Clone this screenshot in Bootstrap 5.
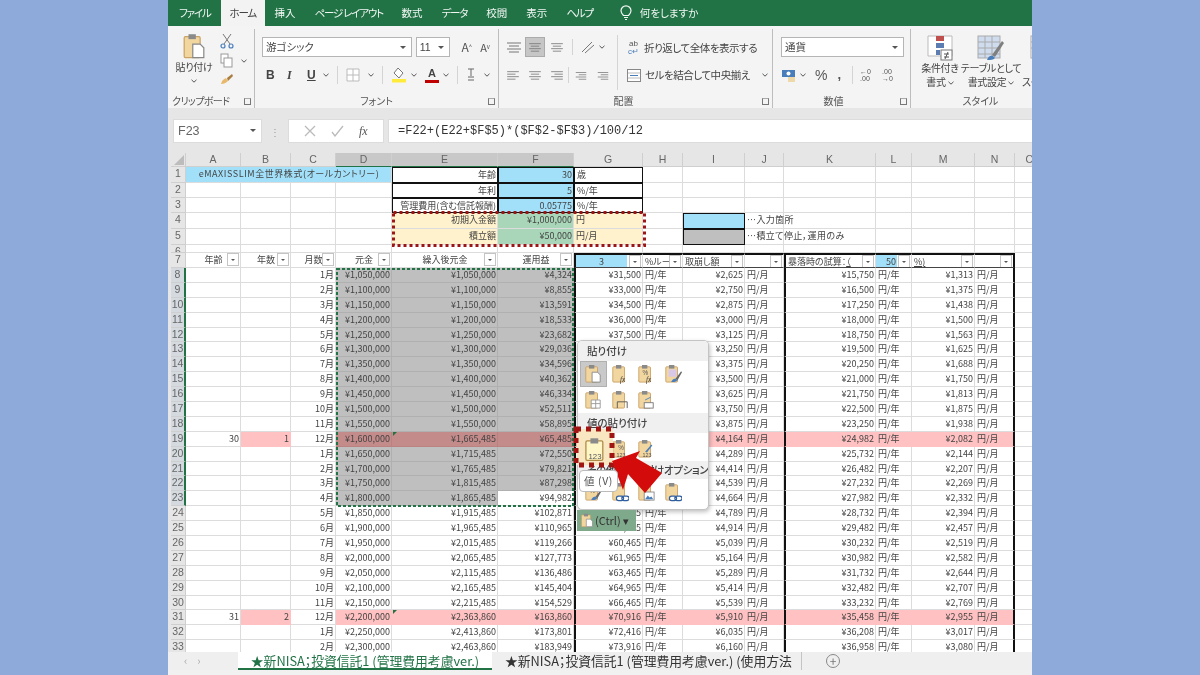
<!DOCTYPE html>
<html lang="ja">
<head>
<meta charset="UTF-8">
<title>Excel</title>
<link href="https://cdn.jsdelivr.net/npm/bootstrap@5.3.0/dist/css/bootstrap.min.css" rel="stylesheet">
<style>
  body { background:#8eaadb; font-family:"Noto Sans CJK JP","Liberation Sans",sans-serif; font-feature-settings:"palt"; color:#333; overflow:hidden; }
  .xl-app { width:864px; height:675px; background:#e6e6e6; overflow:hidden; filter:blur(.35px); }
  /* tab bar */
  .xl-tabs { height:26px; background:#217346; color:#f2f7f4; font-size:10.5px; }
  .xl-tab { padding:0 9.5px; line-height:26px; white-space:nowrap; }
  .xl-tab.on { background:#f3f3f3; color:#444; }
  .xl-kana { letter-spacing:-1.2px; }
  /* ribbon */
  .xl-ribbon { height:82px; background:#f4f4f4; font-size:10.5px; }
  .rb-grp { position:relative; height:79px; border-right:1px solid #bdbdbd; flex:none; }
  .rb-label { position:absolute; left:0; right:0; bottom:0; line-height:14px; text-align:center; font-size:10px; color:#555; white-space:nowrap; }
  .rb-launch { position:absolute; right:3px; bottom:3px; width:7px; height:7px; border:1px solid #777; border-top-color:#aaa; border-right-color:#777; }
  .rb-sel { height:20px; background:#fff; border:1px solid #b5b5b5; line-height:18px; padding:0 3px; position:relative; font-size:10.5px; color:#444; }
  .rb-sel::after { content:""; position:absolute; right:5px; top:8px; border:3px solid transparent; border-top-color:#555; border-bottom:0; }
  .rb-row { height:20px; }
  .rb-v { width:6px; height:6px; flex:none; }
  .rb-txt { font-size:10.5px; color:#444; white-space:nowrap; letter-spacing:-.45px; }
  .rb-big { font-size:10px; line-height:14px; text-align:center; color:#444; white-space:nowrap; letter-spacing:-.3px; }
  .rb-on { background:#c6c6c6; border:1px solid #ababab; }
  .rb-sep { width:1px; background:#d4d4d4; }
  /* formula bar */
  .xl-fbar { height:45px; padding:11px 0 10px 5px; background:#e6e6e6; }
  .fb-box { background:#fff; height:24px; border:1px solid #dcdcdc; color:#666; }
  .fb-name { width:89px; font-size:12.5px; padding-left:4px; line-height:22px; position:relative; font-family:"Liberation Sans",sans-serif; }
  .fb-name::after { content:""; position:absolute; right:5px; top:9px; border:3px solid transparent; border-top-color:#555; border-bottom:0; }
  .fb-tools { width:96px; }
  .fb-formula { font-family:"Liberation Mono",monospace; font-size:12px; line-height:22px; padding-left:9px; color:#333; }
  /* sheet */
  .xl-sheet { position:relative; height:499px; background:#fff; overflow:hidden; }
  .xl-grid { display:grid;
    grid-template-columns:3px 15px 55px 50px 45px 56px 106px 76px 69px 40px 62px 39px 92px 36px 63px 40px 30px;
    grid-template-rows:14px 16px 15px 15px 16px 16px 8px 15px repeat(26,14.9px);
    font-size:9px; line-height:14px; color:#444; }
  .xc { border-right:1px solid #dcdcdc; border-bottom:1px solid #dcdcdc; padding:0 1px 0 2px; white-space:nowrap; overflow:hidden; position:relative; }
  .xgut, .xhd { background:#e6e6e6; }
  .xhd { text-align:center; color:#666; border-right:1px solid #cfcfcf; border-bottom:1px solid #cfcfcf; font-family:"Liberation Sans",sans-serif; font-size:10.5px; line-height:13px; overflow:hidden; position:relative; }
  .xhd.sel { background:#c8c8c8; border-bottom:1px solid #217346; }
  .xhd.rsel { background:#d4dae0; border-right:2px solid #217346; }
  .xhd.xcorner::after { content:""; position:absolute; right:1px; bottom:1px; border-bottom:10px solid #bcbcbc; border-left:10px solid transparent; }
  .xfree { overflow:visible; letter-spacing:.4px; }
  .xwide { letter-spacing:.55px; }
  .f-blue { background:#a2e0f9; }
  .f-gray { background:#bfbfbf; border-color:#b0b0b0; }
  .f-pink { background:#ffc1c1; border-color:#ffc1c1; }
  .f-gpink { background:#c48b8b; border-color:#bb8282; }
  .f-cream { background:#fff2cc; }
  .f-green { background:#a9d6b8; }
  .f-white { background:#fff; }
  .b-all { border:1px solid #111; }
  .b-l { border-left:2px solid #111; }
  .b-r { border-right:2px solid #111; }
  .b-t { border-top:2px solid #111; }
  .b-b { border-bottom:1px solid #444; }
  .xtri::before { content:""; position:absolute; left:1px; top:0; border-top:4px solid #217346; border-right:4px solid transparent; }
  .xflt { position:absolute; right:1px; top:0; width:12px; height:13px; background:#fff; border:1px solid #c4c4c4; }
  .xflt::after { content:""; position:absolute; left:3px; top:5px; border:2.5px solid transparent; border-top-color:#555; border-bottom:0; }
  /* overlays on the sheet */
  .ov { position:absolute; }
  .ov-red { left:224px; top:58px; }
  .ov-ants { left:168px; top:115px; }
  .pp { left:409px; top:187px; width:132px; height:170px; background:#fff; border:1px solid #c4c4c4; border-radius:5px; box-shadow:1px 2px 4px rgba(0,0,0,.25); font-size:10.5px; overflow:hidden; }
  .pp-h { background:#f0f0f0; height:20px; line-height:20px; padding-left:9px; font-weight:500; color:#444; white-space:nowrap; }
  .pp-r { height:26px; padding-left:2px; }
  .pp-i { width:26.6px; height:26px; flex:none; text-align:center; padding-top:3px; }
  .pp-i.on { background:#c9c9c9; border:1px solid #b0b0b0; padding-top:2px; }
  .ov-tip { left:411px; top:317px; width:39px; height:22px; background:#fff; border:1px solid #bbb; border-radius:4px; font-size:10.5px; line-height:20px; text-align:center; color:#555; letter-spacing:.6px; white-space:nowrap; }
  .ov-hot { left:409px; top:276px; width:36px; height:36px; background:#f8e7c0; }
  .ov-ctrl { left:409px; top:357px; width:59px; height:21px; background:#7fa98b; font-size:11px; line-height:21px; color:#333; padding-left:18px; white-space:nowrap; }
  /* sheet tabs */
  .xl-stabs { height:18px; background:#efefef; font-size:12.8px; line-height:17px; }
  .st-nav { width:70px; color:#aaa; font-size:11px; padding-left:16px; letter-spacing:10px; }
  .st-on { width:254px; background:#fff; border-bottom:2px solid #217346; color:#217346; text-align:center; white-space:nowrap; }
  .st-off { width:310px; padding-left:13px; color:#333; border-right:1px solid #c4c4c4; white-space:nowrap; overflow:hidden; }
  .st-add { width:14px; height:14px; margin:2px 0 0 24px; border:1px solid #888; border-radius:50%; color:#777; line-height:11px; text-align:center; font-size:12px; }
  .xl-foot { height:5px; background:#f1f1f1; }
</style>
</head>
<body>
<svg width="0" height="0" class="position-absolute">
  <symbol id="chev" viewBox="0 0 6 6"><path d="M.5 1.8 3 4.2 5.5 1.8" fill="none" stroke="#555" stroke-width="1"/></symbol>
  <symbol id="lines-l" viewBox="0 0 16 12"><path d="M1 2h14M1 5h10M1 8h14M1 11h10" stroke="#777" fill="none"/></symbol>
  <symbol id="lines-c" viewBox="0 0 16 12"><path d="M1 2h14M3 5h10M1 8h14M3 11h10" stroke="#777" fill="none"/></symbol>
  <symbol id="lines-r" viewBox="0 0 16 12"><path d="M1 2h14M5 5h10M1 8h14M5 11h10" stroke="#777" fill="none"/></symbol>
  <symbol id="clip" viewBox="0 0 20 22">
    <rect x="2" y="3" width="13" height="17" rx="1" fill="#f2d6a0" stroke="#c9a265"/>
    <rect x="5.5" y="1" width="6" height="4" fill="#8a8a8a"/>
    <path d="M9 9h6l3 3v8H9z" fill="#fff" stroke="#888"/>
  </symbol>
</svg>

<div class="d-flex justify-content-center">
<div class="xl-app">

  <div class="xl-tabs d-flex">
    <div class="xl-tab xl-kana" style="margin-left:1px;padding:0 10px">ファイル</div>
    <div class="xl-tab xl-kana on" style="width:44px;padding:0 9px">ホーム</div>
    <div class="xl-tab" style="padding:0 10px">挿入</div>
    <div class="xl-tab xl-kana" style="padding:0 9px">ページ レイアウト</div>
    <div class="xl-tab">数式</div>
    <div class="xl-tab xl-kana">データ</div>
    <div class="xl-tab">校閲</div>
    <div class="xl-tab">表示</div>
    <div class="xl-tab xl-kana">ヘルプ</div>
    <div class="xl-tab d-flex align-items-center gap-2 ms-2">
      <svg width="12" height="16" viewBox="0 0 12 16"><path d="M3.5 10.5C2 9 1 7.8 1 5.8a5 5 0 0 1 10 0c0 2-1 3.2-2.500 4.700zM4 12.500h4M5 14.500h2" fill="none" stroke="#f2f7f4" stroke-width="1.200"/></svg>
      <span>何をしますか</span>
    </div>
  </div>

  <div class="xl-ribbon d-flex">
    <!-- clipboard -->
    <div class="rb-grp d-flex" style="width:87px;margin-top:3px">
      <div class="d-flex flex-column align-items-center" style="width:44px;margin-left:4px">
        <svg width="26" height="27" viewBox="0 0 20 22" class="mt-1"><use href="#clip"/></svg>
        <div class="rb-big">貼り付け</div>
        <svg class="rb-v mt-1"><use href="#chev"/></svg>
      </div>
      <div class="d-flex flex-column gap-1 align-items-start" style="margin:4px 0 0 4px">
        <svg width="14" height="16" viewBox="0 0 14 16"><path d="M3 1l7 10M11 1 4 11" stroke="#777" fill="none"/><circle cx="3" cy="13" r="2" fill="none" stroke="#4a7ebb" stroke-width="1.200"/><circle cx="11" cy="13" r="2" fill="none" stroke="#4a7ebb" stroke-width="1.200"/></svg>
        <div class="d-flex align-items-center gap-2"><svg width="13" height="15" viewBox="0 0 13 15"><rect x="1" y="1" width="7" height="9" fill="#fff" stroke="#999"/><rect x="4" y="5" width="8" height="9" fill="#fff" stroke="#999"/></svg><svg class="rb-v"><use href="#chev"/></svg></div>
        <svg width="14" height="14" viewBox="0 0 14 14"><path d="M1 12c1-4 3-5 5-6l2 3c-2 2-4 3-7 3z" fill="#e8b96a"/><path d="M7 6l5-4 1 2-5 5z" fill="#a87d3f"/></svg>
      </div>
      <div class="rb-label text-start ps-1" style="letter-spacing:-.6px">クリップボード</div>
      <div class="rb-launch"></div>
    </div>

    <!-- font -->
    <div class="rb-grp px-2" style="width:244px;margin-top:3px">
      <div class="d-flex align-items-center gap-1 mt-2" style="margin-left:-1px">
        <div class="rb-sel" style="width:151px">游ゴシック</div>
        <div class="rb-sel" style="width:34px;font-family:'Liberation Sans',sans-serif">11</div>
        <span class="ms-2" style="font-size:12px;color:#555">A<sup style="font-size:6px">^</sup></span>
        <span class="ms-1" style="font-size:11px;color:#555">A<sup style="font-size:6px">v</sup></span>
      </div>
      <div class="rb-row d-flex align-items-center" style="margin:8px 0 0 3px;font-family:'Liberation Sans',sans-serif;font-size:12px;color:#444">
        <b style="width:21px">B</b><i style="width:20px;font-weight:700;font-family:'Liberation Serif',serif">I</i><u style="width:16px;font-weight:700">U</u><svg class="rb-v"><use href="#chev"/></svg>
        <span class="rb-sep mx-2" style="height:18px"></span>
        <svg width="14" height="14" viewBox="0 0 14 14" class="me-1"><path d="M1 1h12v12H1zM7 1v12M1 7h12" fill="#fff" stroke="#bbb"/></svg>
        <svg class="rb-v ms-1"><use href="#chev"/></svg>
        <span class="rb-sep mx-2" style="height:18px"></span>
        <svg width="16" height="16" viewBox="0 0 16 16"><path d="M7 1l5 5-4 5-5-5z" fill="#fff" stroke="#777"/><rect x="1" y="12" width="14" height="3.500" fill="#ffeb3b"/></svg>
        <svg class="rb-v ms-1"><use href="#chev"/></svg>
        <span class="ms-2 d-flex flex-column align-items-center" style="width:14px;font:700 11px/11px 'Liberation Sans',sans-serif">A<span class="d-block w-100" style="height:3px;background:#c00000;margin-top:1px"></span></span>
        <svg class="rb-v ms-1"><use href="#chev"/></svg>
        <span class="rb-sep mx-2" style="height:18px"></span>
        <svg width="10" height="14" viewBox="0 0 10 14"><path d="M2 1h6M5 1v7M2 9h6M2 12h6" stroke="#666" fill="none"/></svg>
        <svg class="rb-v ms-2"><use href="#chev"/></svg>
      </div>
      <div class="rb-label">フォント</div>
      <div class="rb-launch"></div>
    </div>

    <!-- alignment -->
    <div class="rb-grp d-flex" style="width:274px;margin-top:3px">
      <div style="width:118px;padding:7px 0 0 7px">
        <div class="d-flex align-items-center" style="height:21px">
          <svg width="16" height="12" style="margin-right:3px"><use href="#lines-c"/></svg>
          <span class="rb-on d-flex align-items-center justify-content-center" style="width:20px;height:20px"><svg width="14" height="10"><use href="#lines-c"/></svg></span>
          <svg width="14" height="10" style="margin-left:5px"><use href="#lines-c"/></svg>
          <span class="rb-sep mx-2" style="height:16px"></span>
          <svg width="14" height="14" viewBox="0 0 14 14"><path d="M1 12 11 2M4 13 13 5" stroke="#777" fill="none"/></svg>
          <svg class="rb-v ms-1"><use href="#chev"/></svg>
        </div>
        <div class="d-flex align-items-center" style="height:20px;margin-top:8px">
          <svg width="14" height="10"><use href="#lines-l"/></svg>
          <svg width="14" height="10" style="margin-left:8px"><use href="#lines-c"/></svg>
          <svg width="14" height="10" style="margin-left:8px"><use href="#lines-r"/></svg>
          <span class="rb-sep" style="height:16px;margin:0 4px"></span>
          <svg width="12" height="11" style="margin-left:2px"><use href="#lines-r"/></svg>
          <svg width="12" height="11" style="margin-left:10px"><use href="#lines-r"/></svg>
        </div>
      </div>
      <span class="rb-sep" style="height:55px;margin-top:6px"></span>
      <div style="padding:9px 0 0 9px">
        <div class="d-flex align-items-center gap-1" style="height:20px">
          <span style="font:8px/8px 'Liberation Sans',sans-serif;color:#555;width:13px;text-align:center">ab<br><span style="color:#4a7ebb">c↵</span></span>
          <span class="rb-txt">折り返して全体を表示する</span>
        </div>
        <div class="d-flex align-items-center gap-1" style="height:20px;margin-top:7px">
          <svg width="14" height="13" viewBox="0 0 14 13"><rect x=".5" y=".5" width="13" height="12" fill="#fff" stroke="#888"/><path d="M1 4h12M1 9h12" stroke="#bbb"/><path d="M3 6.500h8" stroke="#4a7ebb"/></svg>
          <span class="rb-txt">セルを結合して中央揃え</span>
          <svg class="rb-v ms-2"><use href="#chev"/></svg>
        </div>
      </div>
      <div class="rb-label pe-4">配置</div>
      <div class="rb-launch"></div>
    </div>

    <!-- number -->
    <div class="rb-grp px-2" style="width:138px;margin-top:3px">
      <div class="rb-sel mt-2" style="width:123px">通貨</div>
      <div class="d-flex align-items-center" style="height:20px;margin-top:8px;font-family:'Liberation Sans',sans-serif;color:#555">
        <svg width="15" height="14" viewBox="0 0 15 14"><rect x="1" y="2" width="13" height="7" fill="#4a7ebb"/><circle cx="7.500" cy="5.500" r="2" fill="#fff"/><rect x="7" y="9" width="7" height="5" fill="#f0d9a8"/></svg>
        <svg class="rb-v ms-1"><use href="#chev"/></svg>
        <span style="font-size:14px;margin-left:9px">%</span>
        <b style="font-size:13px;margin-left:10px">,</b>
        <span class="rb-sep" style="height:18px;margin:0 7px 0 11px"></span>
        <span style="font-size:7px;line-height:7px;width:14px">←0<br>.00</span>
        <span style="font-size:7px;line-height:7px;width:14px;margin-left:8px">.00<br>→0</span>
      </div>
      <div class="rb-label pe-3">数値</div>
      <div class="rb-launch"></div>
    </div>

    <!-- style -->
    <div class="d-flex position-relative flex-grow-1" style="margin-top:3px;height:79px">
      <div class="d-flex flex-column align-items-center" style="width:46px;margin-left:6px;padding-top:6px">
        <svg width="26" height="26" viewBox="0 0 26 26"><path d="M1 1h24v20H1z" fill="#fff" stroke="#bbb"/><rect x="9" y="1" width="8" height="5" fill="#c0504d"/><rect x="9" y="8" width="8" height="5" fill="#5b7db1"/><rect x="9" y="15" width="4" height="5" fill="#5b7db1"/><rect x="14" y="15" width="11" height="10" fill="#fff" stroke="#777"/><path d="M17 19h5M17 22h5M21 17l-3 7" stroke="#555" fill="none"/></svg>
        <div class="rb-big">条件付き<br>書式 <svg class="rb-v"><use href="#chev"/></svg></div>
      </div>
      <div class="d-flex flex-column align-items-center" style="width:56px;padding-top:6px">
        <svg width="28" height="26" viewBox="0 0 28 26"><rect x="1" y="1" width="22" height="22" fill="#cfdcee" stroke="#aaa"/><path d="M1 7h22M1 13h22M1 19h22M8 1v22M15 1v22" stroke="#aaa" fill="none"/><path d="M15 20 25 6l2 2-9 14z" fill="#7f7f7f"/><path d="M10 25c1-3 3-5 6-4l2 2c-2 2-4 2-8 2z" fill="#4a7ebb"/></svg>
        <div class="rb-big">テーブルとして<br>書式設定 <svg class="rb-v"><use href="#chev"/></svg></div>
      </div>
      <div class="d-flex flex-column overflow-hidden" style="margin-left:3px;padding-top:6px;flex:1">
        <svg width="20" height="26" viewBox="0 0 20 26" class="ms-2"><rect x="1" y="1" width="24" height="22" fill="#fff" stroke="#aaa"/><path d="M1 7h24M1 13h24" stroke="#aaa"/></svg>
        <div class="rb-big text-start">&nbsp;<br>スタ</div>
      </div>
      <div class="rb-label">スタイル</div>
    </div>
  </div>

  <div class="xl-fbar d-flex">
    <div class="fb-box fb-name">F23</div>
    <div class="d-flex align-items-center justify-content-center" style="width:26px;color:#999;font-size:10px">⋮</div>
    <div class="fb-box fb-tools d-flex align-items-center justify-content-around px-2">
      <svg width="12" height="12" viewBox="0 0 12 12"><path d="M1 1l10 10M11 1 1 11" stroke="#bbb" stroke-width="1.300"/></svg>
      <svg width="13" height="12" viewBox="0 0 13 12"><path d="M1 7l3 4 8-10" stroke="#bbb" stroke-width="1.300" fill="none"/></svg>
      <i style="font:italic 12px 'Liberation Serif',serif;color:#555">fx</i>
    </div>
    <div class="fb-box fb-formula flex-grow-1 ms-1" style="border-right:0">=F22+(E22+$F$5)*($F$2-$F$3)/100/12</div>
  </div>

  <div class="xl-sheet">
    <div class="xl-grid" id="grid"></div>

    <svg class="ov ov-ants" width="238" height="239"><rect x="1" y="1" width="236" height="237" fill="none" stroke="#217346" stroke-width="2" stroke-dasharray="3 2"/></svg>
    <svg class="ov ov-red" width="255" height="36"><rect x="1.500" y="1.500" width="251" height="33" fill="none" stroke="#9c1616" stroke-width="3" stroke-dasharray="3 3"/></svg>

    <!-- paste menu -->
    <div class="ov pp">
      <div class="pp-h">貼り付け</div>
      <div class="pp-r d-flex" id="pr1"></div>
      <div class="pp-r d-flex" id="pr2"></div>
      <div class="pp-h">値の貼り付け</div>
      <div class="pp-r d-flex" id="pr3" style="height:28px;padding-top:3px"></div>
      <div class="pp-h" style="height:18px;line-height:18px;text-align:right;padding-right:3px;letter-spacing:-.4px">その他の貼り付けオプション</div>
      <div class="pp-r d-flex" id="pr4"></div>
    </div>
    <div class="ov ov-hot"></div>
    <svg class="ov" style="left:414px;top:284px" width="26" height="26" viewBox="0 0 20 20"><rect x="3" y="3" width="13" height="15" rx="1" fill="#fff6c8" stroke="#b08c4a"/><rect x="6.500" y="1" width="6" height="4" fill="#8a8a8a"/><text x="10" y="17" font-size="6" text-anchor="middle" font-family="Liberation Sans" fill="#555">123</text></svg>
    <svg class="ov" style="left:405px;top:273px" width="42" height="42"><rect x="3" y="3" width="36" height="36" fill="none" stroke="#a01414" stroke-width="5" stroke-dasharray="5 5"/></svg>
    <svg class="ov" style="left:0;top:0" width="864" height="499"><polygon points="444,308 472,298 468,305 494,320 477,340 460,321 455,337" fill="#d40b0b"/></svg>
    <div class="ov ov-tip">値 (V)</div>
    <div class="ov ov-ctrl">(Ctrl) ▾<svg class="position-absolute" style="left:3px;top:3px" width="14" height="15" viewBox="0 0 20 22"><use href="#clip"/></svg></div>
  </div>

  <div class="xl-stabs d-flex">
    <div class="st-nav">‹›</div>
    <div class="st-on">★新NISA；投資信託1 (管理費用考慮ver.)</div>
    <div class="st-off">★新NISA；投資信託1 (管理費用考慮ver.) (使用方法</div>
    <div class="st-add">+</div>
  </div>
  <div class="xl-foot"></div>
</div>
</div>

<script src="https://cdn.jsdelivr.net/npm/bootstrap@5.3.0/dist/js/bootstrap.bundle.min.js"></script>
<script>
  const grid = document.getElementById('grid');
  const letters = 'ABCDEFGHIJKLMNO'.split('');

  function cell(text, cls, span) {
    const d = document.createElement('div');
    d.className = cls;
    d.innerHTML = text;
    if (span) d.style.gridColumn = 'span ' + span;
    grid.appendChild(d);
  }
  const yen = n => '¥' + Math.round(n).toLocaleString('en-US');

  // column letters
  cell('', 'xgut');
  cell('', 'xhd xcorner');
  letters.forEach(c => cell(c, 'xhd' + ('DEF'.includes(c) ? ' sel' : '')));

  // rows 1-6
  const topRows = {
    1: { E:['年齢','b-all text-end'], F:['30','b-all f-blue text-end'], G:['歳','b-all'] },
    2: { E:['年利','b-all text-end'], F:['5','b-all f-blue text-end'], G:['%/年','b-all'] },
    3: { E:['管理費用(含む信託報酬)','b-all text-end'], F:['0.05775','b-all f-blue text-end'], G:['%/年','b-all'] },
    4: { E:['初期入金額','f-cream text-end'], F:['¥1,000,000','f-green text-end'], G:['円','f-cream'],
         I:['','b-all f-blue'], J:['…入力箇所','xfree'] },
    5: { E:['積立額','f-cream text-end'], F:['¥50,000','f-green text-end'], G:['円/月','f-cream'],
         I:['','b-all f-gray'], J:['…積立て停止，運用のみ','xfree'] },
    6: {}
  };
  for (let r = 1; r <= 6; r++) {
    cell('', 'xgut');
    cell(r, 'xhd');
    letters.forEach(c => {
      if (r === 1 && c === 'A') { cell('eMAXISSLIM全世界株式(オールカントリー)', 'xc f-blue text-center xwide', 4); return; }
      if (r === 1 && 'BCD'.includes(c)) return;
      const v = topRows[r][c] || ['', ''];
      cell(v[0], 'xc ' + v[1]);
    });
  }

  // row 7, filter headers
  const heads = { A:'年齢', B:'年数', C:'月数', D:'元金', E:'繰入後元金', F:'運用益', G:'3', H:'%ルー', I:'取崩し額', J:'',
                  K:'暴落時の試算：<u>（</u>', L:'50', M:'<u>%)</u>', N:'' };
  cell('', 'xgut');
  cell(7, 'xhd');
  letters.forEach(c => {
    if (c === 'O') { cell('', 'xc'); return; }
    let cls = 'xc text-center';
    if ('GHIJKLMN'.includes(c)) cls += ' b-t b-b';
    if (c === 'G' || c === 'K') cls += ' b-l';
    if (c === 'N') cls += ' b-r';
    if (c === 'H' || c === 'I' || c === 'K' || c === 'M') cls = cls.replace('text-center', 'text-start');
    if (c === 'L') cls = cls.replace('text-center', 'text-end');
    let inner = heads[c] + '<span class="xflt"></span>';
    if (c === 'G') inner = '<span class="d-block f-blue" style="margin:0 14px 0 -2px">3</span><span class="xflt"></span>';
    if (c === 'L') inner = '<span class="d-block f-blue" style="margin:0 13px 0 -2px;padding-right:1px">50</span><span class="xflt"></span>';
    cell(inner, cls);
  });

  // body rows 8-33
  const gain = [4324,8855,13591,18533,23682,29036,34596,40362,46334,52511,58895,65485,72550,79821,87298,94982,
                102871,110965,119266,127773,136486,145404,154529,163860,173801,183949];
  for (let r = 8; r <= 33; r++) {
    const i = r - 8;
    const gen = 1050000 + 50000 * i;
    let ins = gen;
    if (r >= 19) ins = 1665485 + 50000 * (r - 19);
    if (r >= 31) ins = 2363860 + 50000 * (r - 31);
    const pink = r === 19 || r === 31;
    const gray = r <= 23;
    const tint = pink ? ' f-pink' : '';
    const g = ins * 0.03, k = ins * 0.015;
    const month = ((i % 12) + 1) + '月';
    const dfFill = (gray && pink) ? ' f-gpink' : gray ? ' f-gray' : tint;

    cell('', 'xgut');
    cell(r, 'xhd' + (gray ? ' rsel' : ''));
    cell(pink ? (r === 19 ? 30 : 31) : '', 'xc text-end');
    cell(pink ? (r === 19 ? 1 : 2) : '', 'xc text-end' + tint);
    cell(month, 'xc text-end');
    cell(yen(gen), 'xc text-end' + dfFill);
    cell(yen(ins), 'xc text-end' + dfFill + (pink ? ' xtri' : ''));
    cell(yen(gain[i]), 'xc text-end' + (r === 23 ? ' f-white' : dfFill));
    cell(yen(g), 'xc text-end b-l' + tint);
    cell('円/年', 'xc' + tint);
    cell(yen(g / 12), 'xc text-end' + tint);
    cell('円/月', 'xc' + tint);
    cell(yen(k), 'xc text-end b-l' + tint);
    cell('円/年', 'xc' + tint);
    cell(yen(k / 12), 'xc text-end' + tint);
    cell('円/月', 'xc b-r' + tint);
    cell('', 'xc');
  }

  // paste menu icons
  function icon(extra, on) {
    return '<div class="pp-i' + (on ? ' on' : '') + '"><svg width="18" height="20" viewBox="0 0 20 22">' +
      '<rect x="2" y="3" width="13" height="17" rx="1" fill="#f2d6a0" stroke="#c9a265"/>' +
      '<rect x="5.500" y="1" width="6" height="4" fill="#8a8a8a"/>' + extra + '</svg></div>';
  }
  const paper = '<path d="M9 9h6l3 3v8H9z" fill="#fff" stroke="#888"/>';
  const label = t => '<text x="13" y="20" font-size="8" font-style="italic" text-anchor="middle" font-family="Liberation Serif" fill="#333">' + t + '</text>';
  const brush = '<path d="M8 20c1-3 3-4 5-4l2 2c-2 2-3 2-7 2z" fill="#4a7ebb"/><path d="M13 16l6-8 1 1-5 9z" fill="#666"/>';
  const cells = '<path d="M8 11h10v9H8zM13 11v9M8 15h10" fill="#fff" stroke="#999"/>';
  const links = '<path d="M6 18a2.500 2.500 0 0 1 2.500-2.500h3a2.500 2.500 0 0 1 0 5h-3A2.500 2.500 0 0 1 6 18zm6 0a2.500 2.500 0 0 1 2.500-2.500h3a2.500 2.500 0 0 1 0 5h-3a2.500 2.500 0 0 1-2.500-2.500z" fill="#fff" stroke="#2f5f9e" stroke-width="1.300"/>';
  const pic = '<rect x="8" y="11" width="11" height="9" fill="#fff" stroke="#888"/><path d="M9 19l3-4 2 2 2-1 2 3z" fill="#4a7ebb"/>';
  const putIcons = (id, list) => document.getElementById(id).innerHTML = list.join('');
  putIcons('pr1', [icon(paper, true), icon(label('fx')), icon('<text x="6" y="12" font-size="7" fill="#555" font-family="Liberation Sans">%</text>' + label('fx')), icon('<rect x="5" y="6" width="9" height="8" fill="#d9c7e8"/>' + brush)]);
  putIcons('pr2', [icon(cells), icon('<path d="M7 13h11M7 13v7M18 13v7" fill="none" stroke="#555"/>'), icon('<rect x="8" y="14" width="10" height="6" fill="#fff" stroke="#777"/><path d="M9 11l6-3" stroke="#4a7ebb"/>')]);
  const n123 = '<text x="11" y="20" font-size="6" text-anchor="middle" font-family="Liberation Sans" fill="#555">123</text>';
  putIcons('pr3', [icon(''), icon('<text x="8" y="12" font-size="7" fill="#555" font-family="Liberation Sans">%</text>' + n123), icon(n123 + '<path d="M9 14l7-8 1 1-6 8z" fill="#4a7ebb"/>')]);
  putIcons('pr4', [icon('<text x="6" y="12" font-size="7" fill="#555" font-family="Liberation Sans">%</text>' + brush), icon(links), icon(pic), icon(links)]);
</script>
</body>
</html>
